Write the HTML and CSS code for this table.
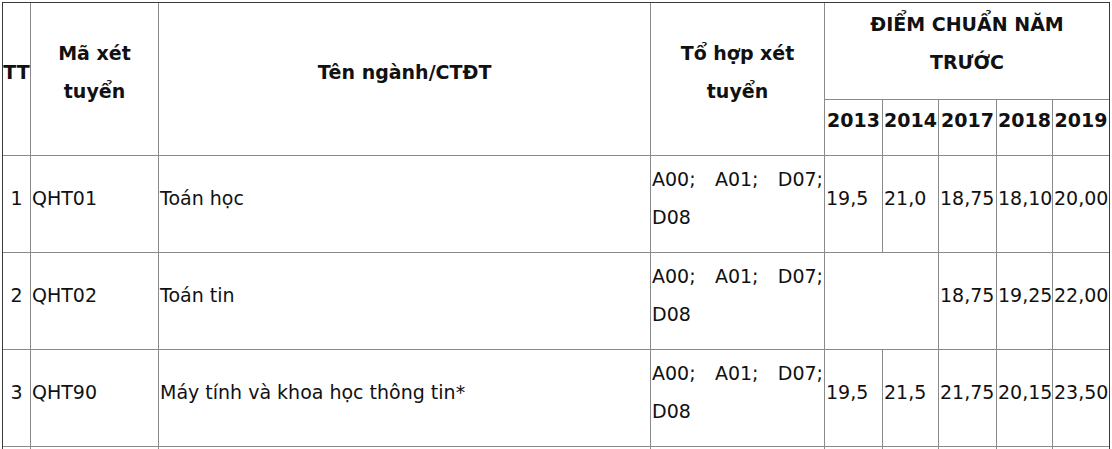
FILE: index.html
```html
<!DOCTYPE html>
<html lang="vi">
<head>
<meta charset="utf-8">
<title>Điểm chuẩn</title>
<link rel="stylesheet" href="styles.css">
</head>
<body>
<table class="scores">
  <colgroup>
    <col class="c-tt">
    <col class="c-code">
    <col class="c-name">
    <col class="c-combo">
    <col class="c-y58">
    <col class="c-y56">
    <col class="c-y58">
    <col class="c-y56">
    <col class="c-ylast">
  </colgroup>
  <thead>
    <tr class="h1">
      <th rowspan="2">TT</th>
      <th rowspan="2">Mã xét tuyển</th>
      <th rowspan="2">Tên ngành/CTĐT</th>
      <th rowspan="2">Tổ hợp xét tuyển</th>
      <th colspan="5" class="last group">ĐIỂM CHUẨN NĂM<br>TRƯỚC</th>
    </tr>
    <tr class="h2">
      <th>2013</th>
      <th>2014</th>
      <th>2017</th>
      <th>2018</th>
      <th class="last">2019</th>
    </tr>
  </thead>
  <tbody>
    <tr>
      <td class="center">1</td>
      <td>QHT01</td>
      <td>Toán học</td>
      <td class="just">A00; A01; D07; D08</td>
      <td>19,5</td>
      <td>21,0</td>
      <td>18,75</td>
      <td>18,10</td>
      <td class="last">20,00</td>
    </tr>
    <tr>
      <td class="center">2</td>
      <td>QHT02</td>
      <td>Toán tin</td>
      <td class="just">A00; A01; D07; D08</td>
      <td colspan="2"></td>
      <td>18,75</td>
      <td>19,25</td>
      <td class="last">22,00</td>
    </tr>
    <tr>
      <td class="center">3</td>
      <td>QHT90</td>
      <td>Máy tính và khoa học thông tin*</td>
      <td class="just">A00; A01; D07; D08</td>
      <td>19,5</td>
      <td>21,5</td>
      <td>21,75</td>
      <td>20,15</td>
      <td class="last">23,50</td>
    </tr>
    <tr>
      <td></td><td></td><td></td><td></td><td></td><td></td><td></td><td></td><td class="last"></td>
    </tr>
  </tbody>
</table>
</body>
</html>
```

FILE: styles.css
```css
html, body {
  margin: 0;
  padding: 0;
  background: #ffffff;
}

body {
  padding: 2px 0 0 2px;
  font-family: "DejaVu Sans", Verdana, sans-serif;
  font-size: 19px;
  color: #111111;
}

.scores {
  table-layout: fixed;
  width: 1108px;
  border-collapse: separate;
  border-spacing: 0;
  border-top: 1px solid #3a3a3a;
  border-left: 1px solid #3a3a3a;
  border-right: 1px solid #3a3a3a;
}

.c-tt { width: 28px; }
.c-code { width: 128px; }
.c-name { width: 492px; }
.c-combo { width: 174px; }
.c-y58 { width: 58px; }
.c-y56 { width: 56px; }
.c-ylast { width: 56px; }

.scores th,
.scores td {
  box-sizing: border-box;
  border-right: 1px solid #8a8a8a;
  border-bottom: 1px solid #8a8a8a;
  line-height: 38px;
  vertical-align: middle;
  overflow: visible;
  white-space: normal;
}

.scores th {
  font-weight: bold;
  text-align: center;
  padding: 1px 0 16px;
}

.scores th.group {
  padding: 0 0 17px;
}

.scores td {
  text-align: left;
  padding: 4px 1px 16px;
}

.scores .last {
  border-right: none;
}

.h1 { height: 97px; }
.h2 { height: 56px; }
.scores tbody tr { height: 97px; }

.scores td.center {
  text-align: center;
}

.scores td.just {
  text-align: justify;
}
```
